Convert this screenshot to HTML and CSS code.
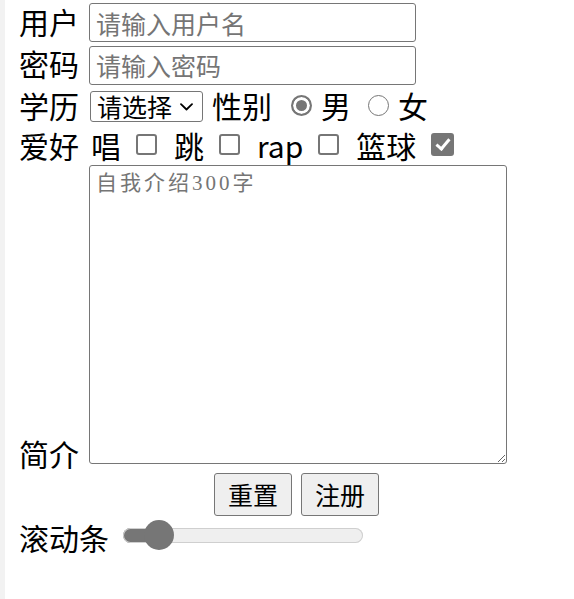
FILE: index.html
```html
<!DOCTYPE html>
<html lang="zh">
<head>
<meta charset="utf-8">
<title>注册</title>
<link rel="stylesheet" href="styles.css">
</head>
<body>
<div class="page">
  <form class="form">
    <div class="row row-user">
      <label class="lbl" for="u">用户</label>
      <input id="u" class="text" type="text" placeholder="请输入用户名">
    </div>
    <div class="row row-pass">
      <label class="lbl" for="p">密码</label>
      <input id="p" class="text" type="password" placeholder="请输入密码">
    </div>
    <div class="row row-edu">
      <span class="lbl">学历</span>
      <span class="sel-wrap">
        <select class="sel"><option>请选择</option><option>本科</option><option>硕士</option></select>
        <svg class="chev" width="13" height="8" viewBox="0 0 13 8" aria-hidden="true"><path d="M1 1.2 L6.5 6.5 L12 1.2" fill="none" stroke="#000" stroke-width="1.8" stroke-linecap="round" stroke-linejoin="round"/></svg>
      </span>
      <span class="lbl gender">性别</span>
      <label class="opt opt-first"><input class="radio" type="radio" name="g" checked><span class="lbl">男</span></label>
      <label class="opt"><input class="radio" type="radio" name="g"><span class="lbl">女</span></label>
    </div>
    <div class="row row-hobby">
      <span class="lbl">爱好</span>
      <label class="hobby hobby-first"><span class="lbl">唱</span><input class="check" type="checkbox"></label>
      <label class="hobby"><span class="lbl">跳</span><input class="check" type="checkbox"></label>
      <label class="hobby"><span class="lbl">rap</span><input class="check" type="checkbox"></label>
      <label class="hobby"><span class="lbl">篮球</span><input class="check" type="checkbox" checked></label>
    </div>
    <div class="row row-intro">
      <label class="lbl lbl-intro" for="t">简介</label>
      <textarea id="t" class="area" placeholder="自我介绍300字"></textarea>
    </div>
    <div class="row row-btns">
      <button class="btn" type="reset">重置</button>
      <button class="btn" type="button">注册</button>
    </div>
    <div class="row row-range">
      <span class="lbl">滚动条</span>
      <input class="range" type="range" min="0" max="100" value="10">
    </div>
  </form>
</div>
</body>
</html>
```

FILE: styles.css
```css
html, body {
  margin: 0;
  padding: 0;
  background: #ffffff;
}

body {
  font-family: "Noto Sans CJK SC", "Noto Sans", sans-serif;
  color: #000;
}

.page {
  min-height: 599px;
  box-sizing: border-box;
  border-left: 5px solid #f2f2f2;
  padding-left: 14px;
}

.form {
  margin: 0;
}

.row {
  display: flex;
  align-items: center;
}

.lbl {
  font-size: 30px;
  line-height: 30px;
  padding-bottom: 4px;
  white-space: nowrap;
}

.row-user { height: 45px; }
.row-pass { height: 40px; }
.row-edu { height: 43px; }
.row-hobby { height: 37px; }

.text {
  box-sizing: border-box;
  width: 327px;
  height: 39px;
  margin: 0 0 0 10px;
  padding: 0 6px;
  border: 1px solid #767676;
  border-radius: 3px;
  font-family: "Noto Sans CJK SC", sans-serif;
  font-size: 25px;
  color: #000;
  background: #fff;
}

.text::placeholder,
.area::placeholder {
  color: #757575;
}

.sel-wrap {
  position: relative;
  display: inline-flex;
  margin-left: 11px;
}

.sel {
  -webkit-appearance: none;
  appearance: none;
  box-sizing: border-box;
  width: 113px;
  height: 31px;
  margin: 0;
  padding: 0 0 0 6px;
  border: 1px solid #767676;
  border-radius: 3px;
  font-family: "Noto Sans CJK SC", sans-serif;
  font-size: 25px;
  line-height: 29px;
  color: #000;
  background-color: #fff;
}

.chev {
  position: absolute;
  right: 10px;
  top: 12px;
  pointer-events: none;
}

.gender {
  margin-left: 9px;
}

.opt {
  display: flex;
  align-items: center;
  gap: 9px;
  margin-left: 17px;
}

.opt-first {
  margin-left: 19px;
}

.radio {
  -webkit-appearance: none;
  appearance: none;
  flex-shrink: 0;
  box-sizing: border-box;
  width: 21px;
  height: 21px;
  margin: 0 0 3px 0;
  border: 1.6px solid #767676;
  border-radius: 50%;
  background: #fff;
}

.radio:checked {
  border-width: 2px;
  background: #767676;
  box-shadow: inset 0 0 0 3px #fff;
}

.hobby {
  display: flex;
  align-items: center;
  gap: 15px;
  margin-left: 17px;
}

.hobby-first {
  margin-left: 12px;
}

.check {
  -webkit-appearance: none;
  appearance: none;
  flex-shrink: 0;
  position: relative;
  box-sizing: border-box;
  width: 21px;
  height: 21px;
  margin: 0 0 4px 0;
  border: 2px solid #767676;
  border-radius: 3px;
  background: #fff;
}

.check:checked {
  width: 23px;
  height: 23px;
  background: #767676;
  border-color: #767676;
}

.check:checked::after {
  content: "";
  position: absolute;
  left: 5.5px;
  top: 1px;
  width: 5px;
  height: 11px;
  border: solid #fff;
  border-width: 0 3px 3px 0;
  transform: rotate(40deg);
}

.row-intro {
  align-items: flex-end;
}

.lbl-intro {
  padding-bottom: 0;
}

.area {
  box-sizing: border-box;
  width: 418px;
  height: 299px;
  margin: 0 0 4px 10px;
  padding: 5px 6px;
  border: 1px solid #767676;
  border-radius: 3px;
  font-family: "Liberation Serif", "Noto Sans CJK SC", serif;
  font-size: 21px;
  line-height: 24px;
  letter-spacing: 3px;
  color: #000;
  background: #fff;
}

.row-btns {
  justify-content: center;
  gap: 9px;
  margin-top: 5px;
}

.btn {
  box-sizing: border-box;
  width: 78px;
  height: 43px;
  margin: 0;
  padding: 0;
  border: 1px solid #767676;
  border-radius: 3px;
  background: #efefef;
  font-family: "Noto Sans CJK SC", sans-serif;
  font-size: 25px;
  line-height: 41px;
  color: #000;
}

.row-range {
  height: 46px;
}

.range {
  -webkit-appearance: none;
  appearance: none;
  width: 240px;
  height: 30px;
  margin: 0 0 8px 14px;
  padding: 0;
  background: transparent;
}

.range::-webkit-slider-runnable-track {
  height: 15px;
  border-radius: 8px;
  background: linear-gradient(to right, #767676 0, #767676 36px, #efefef 36px);
  box-shadow: inset 0 0 0 1px #cfcfcf;
}

.range::-webkit-slider-thumb {
  -webkit-appearance: none;
  appearance: none;
  width: 30px;
  height: 30px;
  border: none;
  border-radius: 50%;
  background: #767676;
  margin-top: -7.5px;
}
```
